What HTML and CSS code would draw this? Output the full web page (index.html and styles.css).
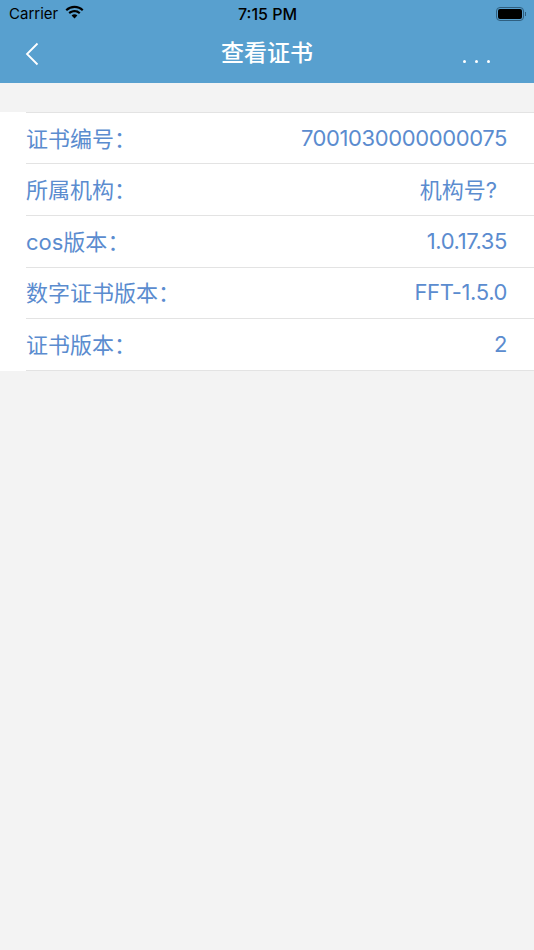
FILE: index.html
```html
<!DOCTYPE html>
<html lang="zh-CN">
<head>
    <meta charset="UTF-8">
    <title>查看证书</title>
    <link rel="stylesheet" href="styles.css">
</head>
<body>
    <header class="header">
        <div class="status-bar">
            <div class="status-left">
                <span class="carrier">Carrier</span>
                <svg class="wifi" width="21" height="15" viewBox="0 0 18 13">
                    <path d="M9 2.600c2.500 0 4.800 1 6.500 2.600l1.300-1.400A11.300 11.300 0 0 0 9 .6 11.300 11.300 0 0 0 1.200 3.800l1.300 1.400A9.400 9.400 0 0 1 9 2.600z"/>
                    <path d="M9 6.300c1.500 0 2.900.6 3.900 1.500l1.300-1.400A7.600 7.600 0 0 0 9 4.400c-2 0-3.800.8-5.200 2l1.300 1.400c1-.9 2.400-1.500 3.900-1.500z"/>
                    <path d="M9 8.100c-1 0-1.800.4-2.500 1L9 11.800l2.500-2.700c-.7-.6-1.500-1-2.500-1z"/>
                </svg>
            </div>
            <span class="time">7:15 PM</span>
            <div class="battery">
                <div class="battery-body"><div class="battery-fill"></div></div>
                <div class="battery-cap"></div>
            </div>
        </div>
        <nav class="nav-bar">
            <svg class="back" width="14" height="24" viewBox="0 0 14 24">
                <path d="M12.500 1.500 2 12l10.500 10.500" fill="none" stroke="#fff" stroke-width="1.800"/>
            </svg>
            <h1 class="title">查看证书</h1>
            <div class="more"><i></i><i></i><i></i></div>
        </nav>
    </header>

    <main class="info-list">
        <div class="info-row">
            <span class="label">证书编号<span class="colon">：</span></span>
            <span class="value">7001030000000075</span>
        </div>
        <div class="info-row">
            <span class="label">所属机构<span class="colon">：</span></span>
            <span class="value value-org">机构号?</span>
        </div>
        <div class="info-row">
            <span class="label">cos版本<span class="colon">：</span></span>
            <span class="value">1.0.17.35</span>
        </div>
        <div class="info-row">
            <span class="label">数字证书版本<span class="colon">：</span></span>
            <span class="value">FFT-1.5.0</span>
        </div>
        <div class="info-row">
            <span class="label">证书版本<span class="colon">：</span></span>
            <span class="value">2</span>
        </div>
    </main>
</body>
</html>
```

FILE: styles.css
```css
html, body {
    margin: 0;
    padding: 0;
}
body {
    width: 534px;
    height: 950px;
    overflow: hidden;
    background-color: #f3f3f3;
    font-family: "Inter", "Noto Sans CJK SC", sans-serif;
}
.header {
    height: 83px;
    background-color: #58a0cf;
}
.status-bar {
    height: 27px;
    display: flex;
    align-items: center;
    justify-content: space-between;
    padding: 0 8px 0 9px;
    color: #000;
    font-size: 15px;
}
.status-left {
    width: 150px;
    display: flex;
    align-items: center;
    gap: 6px;
}
.wifi {
    fill: #000;
    margin-bottom: 2px;
}
.time {
    font-size: 16px;
    font-weight: 500;
}
.battery {
    width: 150px;
    display: flex;
    align-items: center;
    justify-content: flex-end;
    gap: 1px;
}
.battery-body {
    width: 24px;
    height: 10px;
    padding: 1px;
    border: 1px solid #2f5f80;
    border-radius: 4px;
}
.battery-fill {
    width: 100%;
    height: 100%;
    background-color: #000;
    border-radius: 2px;
}
.battery-cap {
    width: 1px;
    height: 4px;
    background-color: #2f5f80;
}
.nav-bar {
    height: 56px;
    display: flex;
    align-items: center;
    justify-content: space-between;
    padding: 0 44px 0 25px;
    position: relative;
}
.back {
    margin-bottom: 3px;
}
.title {
    position: absolute;
    left: 0;
    right: 0;
    margin: 0 0 9px;
    text-align: center;
    color: #fff;
    font-size: 23px;
    font-weight: 500;
}
.more {
    display: flex;
    gap: 9px;
    padding-top: 12px;
}
.more i {
    width: 3px;
    height: 3px;
    border-radius: 50%;
    background-color: #fff;
}
.info-list {
    margin-top: 28.8px;
    background-color: #fff;
}
.info-row {
    height: 51.6px;
    margin-left: 26px;
    padding-right: 27px;
    border-top: 1px solid #e3e3e3;
    display: flex;
    align-items: center;
    justify-content: space-between;
    box-sizing: border-box;
    color: #5b8ccf;
    font-size: 22px;
}
.info-row:last-child {
    height: 52.6px;
    border-bottom: 1px solid #e3e3e3;
}
.label {
    margin-bottom: 3px;
}
.colon {
    font-family: "Noto Sans CJK TC", sans-serif;
}
.value {
    letter-spacing: -0.4px;
    margin-bottom: 1px;
}
.value-org {
    letter-spacing: 0;
    margin-right: 10px;
    margin-bottom: 3px;
}
```
